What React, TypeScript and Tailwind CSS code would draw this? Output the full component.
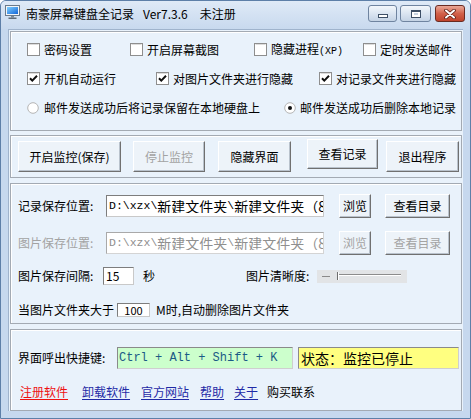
import React from "react";

function Check({ checked }: { checked?: boolean }) {
  return (
    <svg width="13" height="13" viewBox="0 0 13 13" className="shrink-0">
      <rect x="0.5" y="0.5" width="12" height="12" fill="#ffffff" stroke="#8e8e8e" />
      <path d="M1.5 1.5 H11.5" stroke="#dcdcdc" />
      {checked && <path d="M3 6.2 L5.3 8.6 L10 3.8" stroke="#111" strokeWidth="2" fill="none" />}
    </svg>
  );
}

function Radio({ checked }: { checked?: boolean }) {
  return (
    <svg width="12" height="12" viewBox="0 0 12 12" className="shrink-0">
      <circle cx="6" cy="6" r="5.3" fill="#ffffff" stroke="#b4b4b4" />
      {checked && <circle cx="6" cy="6" r="2" fill="#111" />}
    </svg>
  );
}

function Btn({ children, className = "", disabled }: { children: React.ReactNode; className?: string; disabled?: boolean }) {
  return (
    <div
      className={
        "flex items-center justify-center shrink-0 bg-[#edf3f9] border border-t-[#ffffff] border-l-[#ffffff] border-r-[#707070] border-b-[#707070] shadow-[inset_-1px_-1px_0_#b9c2cc] text-[12px] leading-none whitespace-nowrap " +
        (disabled ? "text-[#a3a3a3] " : "text-black ") +
        className
      }
    >
      {children}
    </div>
  );
}

function Panel({ children, className = "" }: { children: React.ReactNode; className?: string }) {
  return (
    <div className={"border border-[#a3aab3] shadow-[inset_1px_1px_0_#ffffff] " + className}>{children}</div>
  );
}

function PathText({ disabled }: { disabled?: boolean }) {
  const mono = "font-['Liberation_Mono',monospace] text-[11.5px]";
  return (
    <div className={"flex items-center whitespace-nowrap overflow-hidden pl-[2px] text-[14px] leading-none " + (disabled ? "text-[#8f8f8f]" : "text-black")}>
      <span className={mono}>D:\xzx\</span>
      <span>新建文件夹</span>
      <span className={mono}>\</span>
      <span>新建文件夹（8）</span>
    </div>
  );
}

export default function App() {
  return (
    <div className="w-[471px] h-[419px] bg-[#c6d8ee] border border-[#5d7fa8] rounded-t-[6px] flex flex-col overflow-hidden font-['Noto_Sans_CJK_SC',sans-serif] text-[12px] text-black">
      {/* Title bar */}
      <div className="h-[28px] shrink-0 flex items-start pl-[4px] pr-[5px] pt-[3px] bg-gradient-to-b from-[#dfeaf7] to-[#c8d9ee]">
        <svg width="15" height="14" viewBox="0 0 15 14" className="mt-[1px] shrink-0">
          <defs>
            <linearGradient id="scr" x1="0" y1="0" x2="1" y2="1">
              <stop offset="0" stopColor="#7fd0ff" />
              <stop offset="1" stopColor="#1466d8" />
            </linearGradient>
          </defs>
          <rect x="0.5" y="0.5" width="14" height="10" fill="#f4f6f8" stroke="#6b7a8a" />
          <rect x="2" y="2" width="11" height="7" fill="url(#scr)" />
          <rect x="6" y="11" width="3" height="1.5" fill="#7d8a97" />
          <rect x="3.5" y="12.5" width="8" height="1.5" fill="#5f6c79" />
        </svg>
        <div className="ml-[6px] mt-[3px] flex items-center text-[12px] leading-[14px] whitespace-nowrap">
          <span>南豪屏幕键盘全记录</span>
          <span className="ml-[9px]">Ver7.3.6</span>
          <span className="ml-[12px]">未注册</span>
        </div>
        <div className="ml-auto flex items-start mt-[1px]">
          <div className="w-[29px] h-[17px] rounded-[3px] border border-[#6f84a0] bg-gradient-to-b from-[#f3f7fb] via-[#dbe5f1] to-[#c4d3e5] flex items-end justify-center pb-[3px]">
            <div className="w-[10px] h-[4px] bg-[#ffffff] border border-[#3d4f66]" />
          </div>
          <div className="ml-[3px] w-[31px] h-[17px] rounded-[3px] border border-[#6f84a0] bg-gradient-to-b from-[#f3f7fb] via-[#dbe5f1] to-[#c4d3e5] flex items-center justify-center">
            <div className="w-[10px] h-[8px] bg-[#ffffff] border border-[#3d4f66] border-t-[2px] flex items-center justify-center">
              <div className="w-[4px] h-[2px] bg-[#c8d4e2]" />
            </div>
          </div>
          <div className="ml-[4px] w-[30px] h-[17px] rounded-[3px] border border-[#6a2b22] bg-gradient-to-b from-[#e9a898] via-[#d2614a] to-[#c0432c] flex items-center justify-center">
            <svg width="12" height="10" viewBox="0 0 12 10">
              <path d="M2 1.5 L10 8.5 M10 1.5 L2 8.5" stroke="#5a1d14" strokeWidth="3.6" strokeLinecap="round" />
              <path d="M2 1.5 L10 8.5 M10 1.5 L2 8.5" stroke="#ffffff" strokeWidth="2" strokeLinecap="round" />
            </svg>
          </div>
        </div>
      </div>

      {/* Client */}
      <div className="ml-[7px] w-[455px] h-[382px] shrink-0 bg-[#e9f2fb] border-l border-t border-[#9fb3cc] flex flex-col px-[1px] pt-[1px]">
        {/* Panel 1 */}
        <Panel className="h-[100px] pt-[3px] flex flex-col">
          <div className="h-[29px] flex items-center pl-[16px] whitespace-nowrap">
            <div className="w-[103px] flex items-center gap-[4px]"><Check /><span>密码设置</span></div>
            <div className="w-[124px] flex items-center gap-[4px]"><Check /><span>开启屏幕截图</span></div>
            <div className="w-[109px] flex items-center gap-[4px]"><Check /><span>隐藏进程<span className="font-['Liberation_Mono',monospace] text-[10px]">(XP)</span></span></div>
            <div className="flex items-center gap-[4px]"><Check /><span>定时发送邮件</span></div>
          </div>
          <div className="h-[29px] flex items-center pl-[16px] whitespace-nowrap">
            <div className="w-[129px] flex items-center gap-[4px]"><Check checked /><span>开机自动运行</span></div>
            <div className="w-[163px] flex items-center gap-[4px]"><Check checked /><span>对图片文件夹进行隐藏</span></div>
            <div className="flex items-center gap-[4px]"><Check checked /><span>对记录文件夹进行隐藏</span></div>
          </div>
          <div className="h-[30px] flex items-center pl-[16px] whitespace-nowrap">
            <div className="w-[257px] flex items-center gap-[5px]"><Radio /><span>邮件发送成功后将记录保留在本地硬盘上</span></div>
            <div className="flex items-center gap-[4px]"><Radio checked /><span>邮件发送成功后删除本地记录</span></div>
          </div>
        </Panel>

        {/* Panel 2 */}
        <Panel className="mt-[4px] h-[43px] flex items-start pl-[7px] pt-[5px]">
          <Btn className="w-[103px] h-[31px]">开启监控(保存)</Btn>
          <Btn className="ml-[12px] w-[72px] h-[31px]" disabled>停止监控</Btn>
          <Btn className="ml-[13px] w-[73px] h-[31px]">隐藏界面</Btn>
          <Btn className="ml-[16px] w-[71px] h-[30px] mt-[-2px]">查看记录</Btn>
          <Btn className="ml-[8px] w-[73px] h-[31px]">退出程序</Btn>
        </Panel>

        {/* Panel 3 */}
        <Panel className="mt-[5px] h-[141px] flex flex-col pl-[7px] pt-[10px] whitespace-nowrap">
          <div className="h-[24px] flex items-center">
            <span className="w-[88px] shrink-0">记录保存位置:</span>
            <div className="w-[218px] h-[22px] bg-white border border-[#7d7d7d] border-r-[#c9c9c9] border-b-[#c9c9c9] flex items-center overflow-hidden">
              <PathText />
            </div>
            <Btn className="ml-[15px] w-[32px] h-[24px]">浏览</Btn>
            <Btn className="ml-[14px] w-[65px] h-[24px]">查看目录</Btn>
          </div>
          <div className="mt-[13px] h-[24px] flex items-center">
            <span className="w-[88px] shrink-0 text-[#a3a3a3]">图片保存位置:</span>
            <div className="w-[218px] h-[22px] bg-white border border-[#a9a9a9] border-r-[#d4d4d4] border-b-[#d4d4d4] flex items-center overflow-hidden">
              <PathText disabled />
            </div>
            <Btn className="ml-[15px] w-[32px] h-[24px]" disabled>浏览</Btn>
            <Btn className="ml-[14px] w-[65px] h-[24px]" disabled>查看目录</Btn>
          </div>
          <div className="mt-[12px] h-[18px] flex items-center">
            <span className="w-[85px] shrink-0">图片保存间隔:</span>
            <div className="w-[31px] h-[18px] bg-white border border-[#7d7d7d] border-r-[#c9c9c9] border-b-[#c9c9c9] flex items-center pl-[2px] text-[12px] leading-none">15</div>
            <span className="ml-[9px] w-[12px]">秒</span>
            <span className="ml-[91px] w-[71px] shrink-0">图片清晰度:</span>
            <svg width="90" height="13" viewBox="0 0 90 13" className="shrink-0">
              <rect x="0" y="0" width="90" height="13" fill="#e2e4e6" />
              <path d="M5 6.5 H13" stroke="#8a8a8a" />
              <path d="M22 4.5 H84" stroke="#8c8c8c" />
              <path d="M22 5.5 H84" stroke="#ffffff" />
              <path d="M20.5 2 V10" stroke="#6e6e6e" />
              <path d="M21.5 2 V10" stroke="#ffffff" />
            </svg>
          </div>
          <div className="mt-[18px] h-[14px] flex items-center">
            <span className="w-[99px] shrink-0">当图片文件夹大于</span>
            <div className="w-[33px] h-[14px] bg-white border border-[#7d7d7d] border-r-[#c9c9c9] border-b-[#c9c9c9] flex items-center justify-center text-[11px] leading-none">100</div>
            <span className="ml-[6px]">M时,自动删除图片文件夹</span>
          </div>
        </Panel>

        {/* Panel 4 */}
        <Panel className="mt-[5px] h-[82px] flex flex-col pl-[7px] pt-[17px]">
          <div className="h-[22px] flex items-center">
            <span className="w-[99px] shrink-0 whitespace-nowrap">界面呼出快捷键:</span>
            <div className="w-[176px] h-[22px] bg-[#ccffcc] border border-[#8a8a8a] border-r-[#cfcfcf] border-b-[#cfcfcf] flex items-center pl-[1px] font-['Liberation_Mono',monospace] text-[12px] text-[#1b5b86] whitespace-nowrap leading-none">
              Ctrl + Alt + Shift + K
            </div>
            <div className="ml-[5px] w-[161px] h-[22px] bg-[#ffff80] border border-[#8a8a8a] border-r-[#cfcfcf] border-b-[#cfcfcf] flex items-center pl-[2px] text-[14px] leading-none whitespace-nowrap">
              状态：监控已停止
            </div>
          </div>
          <div className="mt-[15px] h-[16px] flex items-center pl-[2px] whitespace-nowrap">
            <span className="text-[#ee1111] underline underline-offset-2">注册软件</span>
            <span className="ml-[14px] text-[#1f2aa6] underline underline-offset-2">卸载软件</span>
            <span className="ml-[11px] text-[#1f2aa6] underline underline-offset-2">官方网站</span>
            <span className="ml-[11px] text-[#1f2aa6] underline underline-offset-2">帮助</span>
            <span className="ml-[10px] text-[#1f2aa6] underline underline-offset-2">关于</span>
            <span className="ml-[9px]">购买联系</span>
          </div>
        </Panel>
      </div>
    </div>
  );
}
